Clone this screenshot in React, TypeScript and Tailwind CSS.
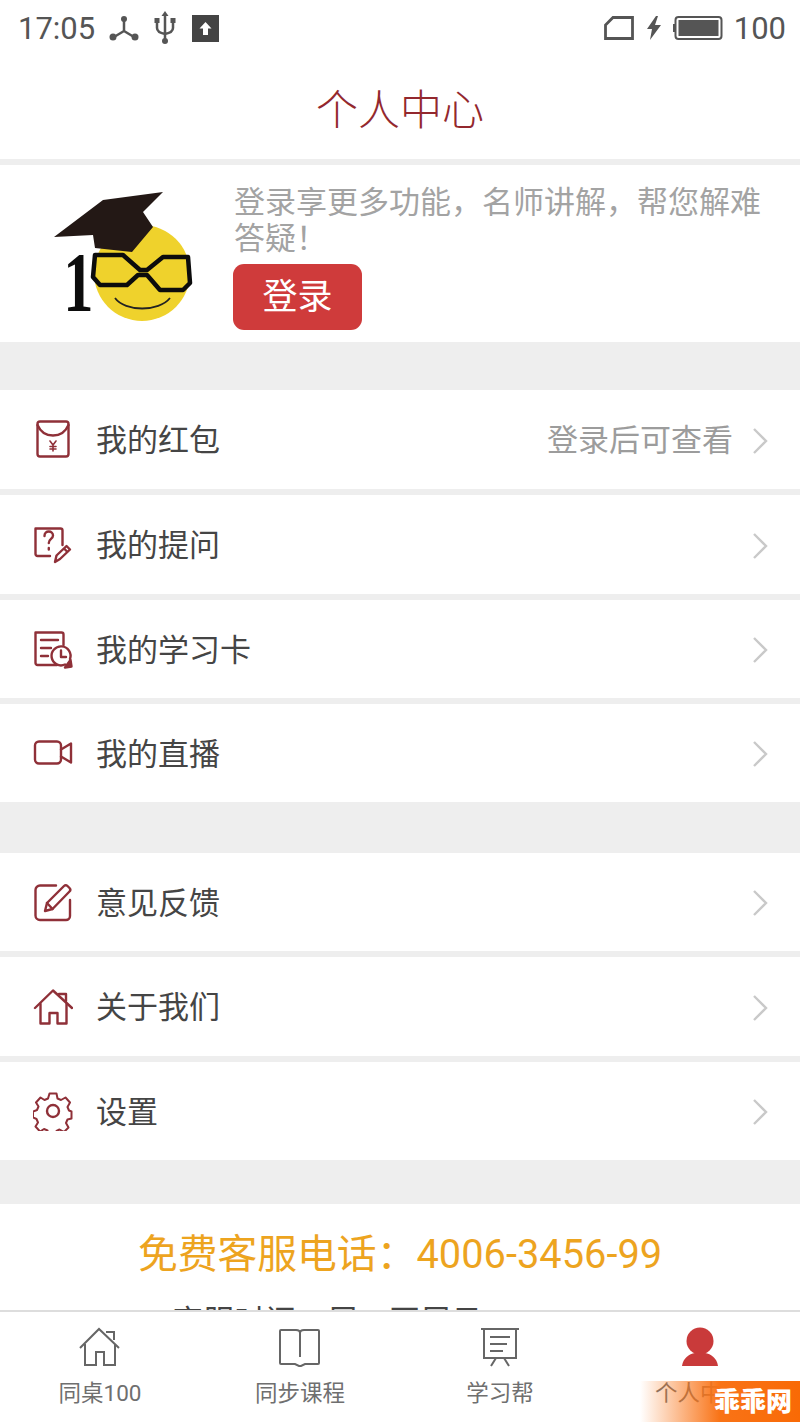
import type { ReactNode } from 'react';

const CJK = "font-['Roboto','Noto_Sans_CJK_SC',sans-serif]";

function RowIcon({ children }: { children: ReactNode }) {
  return (
    <svg viewBox="0 0 40 40" className="w-10 h-10 shrink-0 text-[#8f3038]" fill="none" stroke="currentColor" strokeWidth="2.400" strokeLinecap="round" strokeLinejoin="round">
      {children}
    </svg>
  );
}

const PacketIcon = (
  <RowIcon>
    <rect x="4.500" y="1.500" width="31" height="35" rx="2.500" />
    <path d="M4.500 5c3 7 9 10.500 15.500 10.500S32.500 12 35.500 5" />
    <path d="M17 21l3 4 3-4M20 25v6M17 26.500h6M17 29h6" strokeWidth="1.600" />
  </RowIcon>
);

const QuestionIcon = (
  <RowIcon>
    <path d="M17 31H4.500a2 2 0 0 1-2-2V3.500h25a2 2 0 0 1 2 2V20" />
    <path d="M11.500 11c0-3 2-4.500 4.300-4.500s4.200 1.500 4.200 4c0 3.500-4.200 3.500-4.200 7.500M15.800 23v1.500" />
    <path d="M22 37l1.500-6.500 10-9.500 3.500 3.500-10 9.500zM31 23.500l3.500 3.500" />
  </RowIcon>
);

const CardIcon = (
  <RowIcon>
    <path d="M24 36H4.500a2 2 0 0 1-2-2V3.500h26a2 2 0 0 1 2 2V16" />
    <path d="M8 11h17M8 19h10M8 27h7" />
    <path d="M37 30a9.500 9.500 0 1 0-5 5.500" />
    <path d="M28 21.500V28h5" />
    <path d="M32 38.500l6.500-1-1-6.500z" fill="currentColor" />
  </RowIcon>
);

const VideoIcon = (
  <RowIcon>
    <rect x="2" y="8.500" width="26" height="22" rx="4" />
    <path d="M28 16.500l10-6v19l-10-6" />
  </RowIcon>
);

const FeedbackIcon = (
  <RowIcon>
    <path d="M23 3.500H7A4.500 4.500 0 0 0 2.500 8v25.500A4.500 4.500 0 0 0 7 38h26a4 4 0 0 0 4-4V18" />
    <path d="M12 29l2-8L31 4a2.500 2.500 0 0 1 3.500 0l2 2a2.500 2.500 0 0 1 0 3.500L19.500 27z" />
    <path d="M14 21l5.500 6" />
  </RowIcon>
);

const HomeIcon = (
  <RowIcon>
    <path d="M2 21L20 3.500 39 21" />
    <path d="M7.500 17v19.500h9V26h8v10.500h9V17" />
    <path d="M26 7h7v7" />
  </RowIcon>
);

const GearIcon = (
  <RowIcon>
    <path d="M16.500 2.500h7l1 5 3.500 1.500 4.500-2.500 4.500 5-2.500 4.500 1.500 3.500 2.500 1v7l-4 1-1.500 3.500 2.500 4.500-4.500 4.500-4.500-2.500-3 1.500-1 4h-7l-1-4.500-3.500-1.500-4 2.500-4.500-5 2.500-4-1.500-3.500-3.500-1.500v-6l4-1.500 1.500-3.500-2.500-4 4.500-5 4 2.500 3.500-1.500z" strokeWidth="2" />
    <circle cx="20" cy="20" r="6" />
  </RowIcon>
);

function Chevron() {
  return (
    <svg viewBox="0 0 18 28" className="w-[18px] h-7 shrink-0 mt-[2px] text-[#c9c9c9]" fill="none" stroke="currentColor" strokeWidth="2.400">
      <path d="M2 2l12 12L2 26" />
    </svg>
  );
}

function Row({ icon, label, hint, className }: { icon: ReactNode; label: string; hint?: string; className: string }) {
  return (
    <div className={`flex items-center bg-white pl-[33px] pr-[30px] shrink-0 ${className}`}>
      {icon}
      <span className="ml-[23px] text-[31px] leading-none text-[#454545] pt-[2px]">{label}</span>
      <span className="flex-1" />
      {hint && <span className="mr-[19px] text-[31px] leading-none text-[#9c9c9c] pt-[2px]">{hint}</span>}
      <Chevron />
    </div>
  );
}

function Logo() {
  return (
    <svg viewBox="50 190 150 140" className="w-[150px] h-[140px] shrink-0">
      <circle cx="142" cy="273" r="48" fill="#efd22c" />
      <path d="M54 237l49-37 60-8-20 20 10 15-21 25-37-4-2-13z" fill="#231815" />
      <text x="88" y="311" fontFamily="Liberation Serif" fontWeight="700" fontSize="84" fill="#0c0c0c" transform="scale(0.72 1)">1</text>
      <path d="M95 255h28l17 15h7l16-13h25l2 26-7 7h-23l-13-15h-9l-11 10h-27l-7-8z" fill="#efd22c" stroke="#0c0c0c" strokeWidth="4.500" strokeLinejoin="round" />
      <path d="M115 298c10 14 44 14 55 0" fill="none" stroke="#222" strokeWidth="1.800" />
    </svg>
  );
}

function StatusBar() {
  return (
    <div className="h-[56px] shrink-0 flex items-center pl-[18px] pr-[14px] text-[#555] font-['Roboto',sans-serif]">
      <span className="text-[31px] leading-none">17:05</span>
      <svg viewBox="0 0 30 28" className="ml-[14px] w-[30px] h-7" fill="none" stroke="currentColor" strokeWidth="2.500">
        <path d="M15 7v10M15 17L5 23M15 17l10 6" />
        <circle cx="15" cy="5" r="3" fill="currentColor" stroke="none" />
        <circle cx="4" cy="23" r="3.500" fill="currentColor" stroke="none" />
        <circle cx="26" cy="23" r="3.500" fill="currentColor" stroke="none" />
      </svg>
      <svg viewBox="0 0 24 34" className="ml-[14px] w-6 h-[34px]" fill="none" stroke="currentColor" strokeWidth="2.500">
        <path d="M12 4v26M4 11v6c0 3 3 5 8 6 5-1 8-3 8-6v-6" />
        <path d="M12 0l3.500 5h-7z" fill="currentColor" stroke="none" />
        <circle cx="12" cy="30" r="3" fill="currentColor" stroke="none" />
        <rect x="1.500" y="7" width="5" height="5" fill="currentColor" stroke="none" />
        <rect x="17.500" y="7" width="5" height="5" fill="currentColor" stroke="none" />
      </svg>
      <svg viewBox="0 0 27 27" className="ml-[15px] w-[27px] h-[27px]">
        <rect width="27" height="27" fill="#444" />
        <path d="M13.500 7l6 6.500h-3.500V20h-5v-6.500H7.500z" fill="#fff" />
      </svg>
      <span className="flex-1" />
      <svg viewBox="0 0 30 24" className="w-[30px] h-6" fill="none" stroke="currentColor" strokeWidth="2.800">
        <path d="M1.500 22.500V9L9 1.500h19.500v21z" />
      </svg>
      <svg viewBox="0 0 16 24" className="ml-[12px] w-4 h-6" fill="currentColor">
        <path d="M10 0L1 13h5l-2 11 11-15h-6l3-9z" />
      </svg>
      <svg viewBox="0 0 50 24" className="ml-[11px] w-[50px] h-6">
        <rect x="0" y="8" width="2" height="8" fill="currentColor" />
        <rect x="2.500" y="1" width="46" height="22" rx="3" fill="none" stroke="currentColor" strokeWidth="2" />
        <rect x="5.500" y="4" width="40" height="16" fill="currentColor" />
      </svg>
      <span className="ml-[11px] text-[31px] leading-none">100</span>
    </div>
  );
}

function TabIcon({ children, active }: { children: ReactNode; active?: boolean }) {
  return (
    <svg viewBox="0 0 42 40" className={`w-[42px] h-10 ${active ? 'text-[#c93a3a]' : 'text-[#666]'}`} fill="none" stroke="currentColor" strokeWidth="2">
      {children}
    </svg>
  );
}

function Tab({ icon, label }: { icon: ReactNode; label: string }) {
  return (
    <div className="flex flex-col items-center pt-[15px]">
      {icon}
      <span className="mt-[12px] text-[22.500px] leading-[28px] text-[#6f6f6f]">{label}</span>
    </div>
  );
}

export default function App() {
  return (
    <div className={`relative h-[1422px] w-[800px] overflow-hidden flex flex-col bg-white ${CJK}`}>
      <div className="flex-1 min-h-0 overflow-hidden flex flex-col">
        <StatusBar />
        <div className="h-[109px] shrink-0 flex items-center justify-center border-b-[6px] border-[#eeeeee]">
          <h1 className="text-[42px] leading-none font-light text-[#93282e] pt-[6px]">个人中心</h1>
        </div>
        <div className="h-[177px] shrink-0 flex pl-[50px] pr-[36px]">
          <div className="pt-[25px]">
            <Logo />
          </div>
          <div className="ml-[34px] pt-[20px]">
            <p className="text-[31px] leading-[36px] text-[#a3a3a3]">登录享更多功能，名师讲解，帮您解难答疑！</p>
            <button className="mt-[7px] -ml-px w-[129px] h-[66px] rounded-[11px] bg-[#cf3b3b] text-white text-[35px] leading-none">登录</button>
          </div>
        </div>
        <div className="h-[48px] shrink-0 bg-[#eeeeee]" />
        <Row className="h-[99px]" icon={PacketIcon} label="我的红包" hint="登录后可查看" />
        <div className="h-[6px] shrink-0 bg-[#eeeeee]" />
        <Row className="h-[99px]" icon={QuestionIcon} label="我的提问" />
        <div className="h-[6px] shrink-0 bg-[#eeeeee]" />
        <Row className="h-[98px]" icon={CardIcon} label="我的学习卡" />
        <div className="h-[6px] shrink-0 bg-[#eeeeee]" />
        <Row className="h-[98px]" icon={VideoIcon} label="我的直播" />
        <div className="h-[51px] shrink-0 bg-[#eeeeee]" />
        <Row className="h-[98px]" icon={FeedbackIcon} label="意见反馈" />
        <div className="h-[6px] shrink-0 bg-[#eeeeee]" />
        <Row className="h-[99px]" icon={HomeIcon} label="关于我们" />
        <div className="h-[6px] shrink-0 bg-[#eeeeee]" />
        <Row className="h-[98px]" icon={GearIcon} label="设置" />
        <div className="h-[44px] shrink-0 bg-[#eeeeee]" />
        <div className="flex flex-col items-center pt-[26px] shrink-0">
          <p className="text-[39.800px] leading-[50px] text-[#eda41f]">免费客服电话：4006-3456-99</p>
          <p className="mt-[26px] text-[31px] leading-none text-[#444]">客服时间：周一至周日8:00-22:00</p>
        </div>
      </div>
      <div className="h-[112px] shrink-0 grid grid-cols-4 bg-white border-t-2 border-[#dddddd]">
        <Tab
          label="同桌100"
          icon={
            <TabIcon>
              <path d="M1 21L20 2l20 19" />
              <path d="M6 17v21h11V25h8v13h11V17" />
              <path d="M27 5h8v8" />
            </TabIcon>
          }
        />
        <Tab
          label="同步课程"
          icon={
            <TabIcon>
              <path d="M2 3h15c2 0 4 1 4 3 0-2 2-3 4-3h14a1 1 0 0 1 1 1v32a1 1 0 0 1-1 1H26l-4 2h-2l-4-2H2a1 1 0 0 1-1-1V4a1 1 0 0 1 1-1z" />
              <path d="M21 6v24" />
            </TabIcon>
          }
        />
        <Tab
          label="学习帮"
          icon={
            <TabIcon>
              <path d="M2 2h38M5 2v29h32V2M11 10h20M11 17h17M11 24h13M17 31l-5 8M25 31l5 8" />
            </TabIcon>
          }
        />
        <Tab
          label="个人中心"
          icon={
            <TabIcon active>
              <circle cx="21" cy="14" r="13.500" fill="currentColor" stroke="none" />
              <path d="M3 39c1-8 7-12 13-13h10c6 1 12 5 13 13z" fill="currentColor" stroke="none" />
            </TabIcon>
          }
        />
      </div>
      <div className="absolute right-0 bottom-0 w-[160px] h-[41px] flex items-center justify-end pr-[8px] bg-linear-to-r from-[#ff6a00]/0 via-[#f97316] via-50% to-[#f96a05]">
        <span className="text-[26px] leading-none font-black text-white">乖乖网</span>
      </div>
    </div>
  );
}
